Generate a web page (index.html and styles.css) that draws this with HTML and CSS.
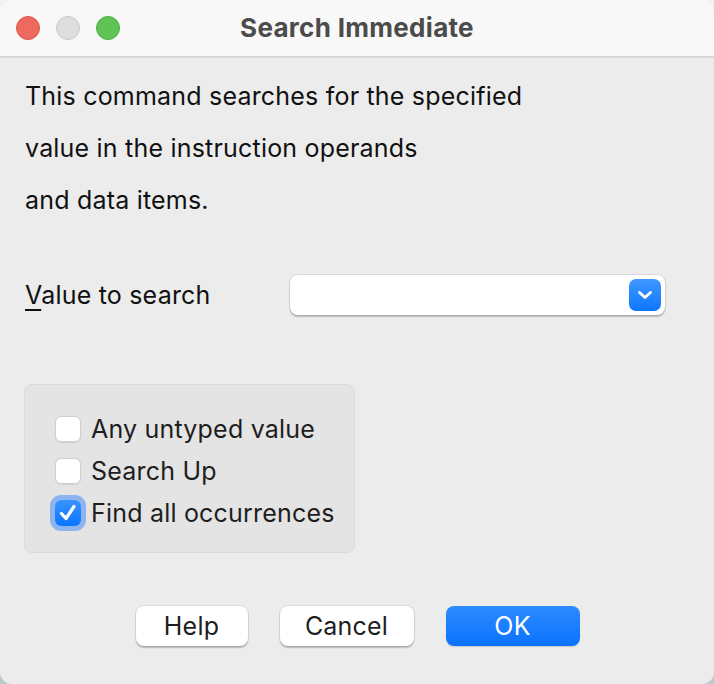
FILE: index.html
```html
<!DOCTYPE html>
<html>
<head>
<meta charset="utf-8">
<link rel="stylesheet" href="styles.css">
</head>
<body>
<div class="window">
  <div class="titlebar">
    <div class="lights">
      <span class="light red"></span>
      <span class="light gray"></span>
      <span class="light green"></span>
    </div>
    <div class="title">Search Immediate</div>
  </div>
  <div class="content">
    <p class="desc">This command searches for the specified<br>value in the instruction operands<br>and data items.</p>
    <div class="field-row">
      <label class="field-label"><u>V</u>alue to search</label>
      <div class="combo">
        <span class="combo-btn">
          <svg width="16" height="10" viewBox="0 0 16 10"><path d="M2.5 2.5 L8 7.5 L13.5 2.5" fill="none" stroke="#fff" stroke-width="2.8" stroke-linecap="round" stroke-linejoin="round"/></svg>
        </span>
      </div>
    </div>
    <div class="group">
      <div class="check-row"><span class="box"></span><span class="check-label">Any untyped value</span></div>
      <div class="check-row"><span class="box"></span><span class="check-label">Search Up</span></div>
      <div class="check-row"><span class="box checked">
        <svg width="22" height="22" viewBox="0 0 22 22"><path d="M4.5 11.5 L9 16.5 L17 4.5" fill="none" stroke="#fff" stroke-width="3.2" stroke-linecap="round" stroke-linejoin="round"/></svg>
      </span><span class="check-label">Find all occurrences</span></div>
    </div>
    <div class="buttons">
      <button class="btn help">Help</button>
      <button class="btn cancel">Cancel</button>
      <button class="btn ok">OK</button>
    </div>
  </div>
</div>
</body>
</html>
```

FILE: styles.css
```css
html, body {
  margin: 0;
  padding: 0;
}
body {
  width: 714px;
  height: 684px;
  overflow: hidden;
  background: linear-gradient(to bottom, #f2f2f2 0, #f2f2f2 40px, #b9c9cc 40px);
  font-family: "Inter", "Liberation Sans", sans-serif;
}
.window {
  width: 714px;
  height: 684px;
  background: #ececec;
  border-radius: 12px;
  overflow: hidden;
  display: flex;
  flex-direction: column;
}
.titlebar {
  height: 56px;
  flex: none;
  background: #f8f8f8;
  border-bottom: 1px solid #d4d4d4;
  box-shadow: 0 1px 1px rgba(0,0,0,0.06);
  display: flex;
  align-items: center;
  position: relative;
}
.lights {
  display: flex;
  gap: 16px;
  padding-left: 16px;
}
.light {
  width: 24px;
  height: 24px;
  border-radius: 50%;
  box-sizing: border-box;
}
.red { background: #ee6a5f; border: 1px solid #d8574d; }
.gray { background: #dedede; border: 1px solid #c8c8c8; }
.green { background: #5fc454; border: 1px solid #4ead44; }
.title {
  position: absolute;
  left: 0;
  right: 0;
  top: 0;
  height: 56px;
  line-height: 56px;
  text-align: center;
  font-weight: 700;
  font-size: 26px;
  color: #4b4b4b;
  letter-spacing: 0.3px;
}
.content {
  padding-left: 25px;
  display: flex;
  flex-direction: column;
}
.desc {
  margin: 13px 0 0 0;
  font-size: 25px;
  letter-spacing: 0.2px;
  line-height: 52px;
  color: #111;
}
.field-row {
  margin-top: 49px;
  display: flex;
  align-items: center;
  height: 40px;
}
.field-label {
  width: 265px;
  font-size: 25px;
  letter-spacing: 0.2px;
  color: #111;
}
.field-label u {
  text-decoration-thickness: 1.5px;
  text-underline-offset: 5px;
}
.combo {
  width: 375px;
  height: 40px;
  box-sizing: border-box;
  background: #fff;
  border-radius: 8px;
  box-shadow: 0 0 0 1px rgba(0,0,0,0.08), 0 1.5px 1.5px rgba(0,0,0,0.22);
  display: flex;
  justify-content: flex-end;
  align-items: center;
  padding-right: 4px;
}
.combo-btn {
  width: 32px;
  height: 32px;
  border-radius: 7px;
  background: linear-gradient(to bottom, #3f97ff, #0d77ff);
  display: flex;
  align-items: center;
  justify-content: center;
}
.group {
  margin-top: 69px;
  width: 331px;
  height: 169px;
  box-sizing: border-box;
  margin-left: -1px;
  background: #e4e4e4;
  border: 1px solid #dadada;
  border-radius: 8px;
  padding: 23px 0 0 30px;
}
.check-row {
  height: 42px;
  display: flex;
  align-items: center;
  gap: 10px;
}
.box {
  width: 26px;
  height: 26px;
  box-sizing: border-box;
  border-radius: 6px;
  background: #fff;
  border: 1px solid #cfcfcf;
  box-shadow: 0 0.5px 1px rgba(0,0,0,0.08);
  display: flex;
  align-items: center;
  justify-content: center;
}
.box.checked {
  background: linear-gradient(to bottom, #3a94ff, #0a74ff);
  border: none;
  box-shadow: 0 0 0 5px rgba(70,140,245,0.55);
}
.check-label {
  font-size: 25px;
  letter-spacing: 0.2px;
  color: #1e1e1e;
}
.buttons {
  margin-top: 53px;
  margin-left: -25px;
  display: flex;
  justify-content: center;
  gap: 32px;
  padding-left: 1px;
}
.btn {
  height: 40px;
  border: none;
  border-radius: 8px;
  font-family: "Inter", "Liberation Sans", sans-serif;
  font-size: 25px;
  letter-spacing: 0.2px;
  padding: 0;
  background: #fff;
  color: #1e1e1e;
  box-shadow: 0 0 0 1px rgba(0,0,0,0.07), 0 1.5px 1.5px rgba(0,0,0,0.22);
}
.help { width: 112px; }
.cancel { width: 134px; }
.ok {
  width: 134px;
  color: #fff;
  background: linear-gradient(to bottom, #2d8bff, #0a72ff);
  box-shadow: 0 1px 1px rgba(0,0,0,0.15);
}
```
